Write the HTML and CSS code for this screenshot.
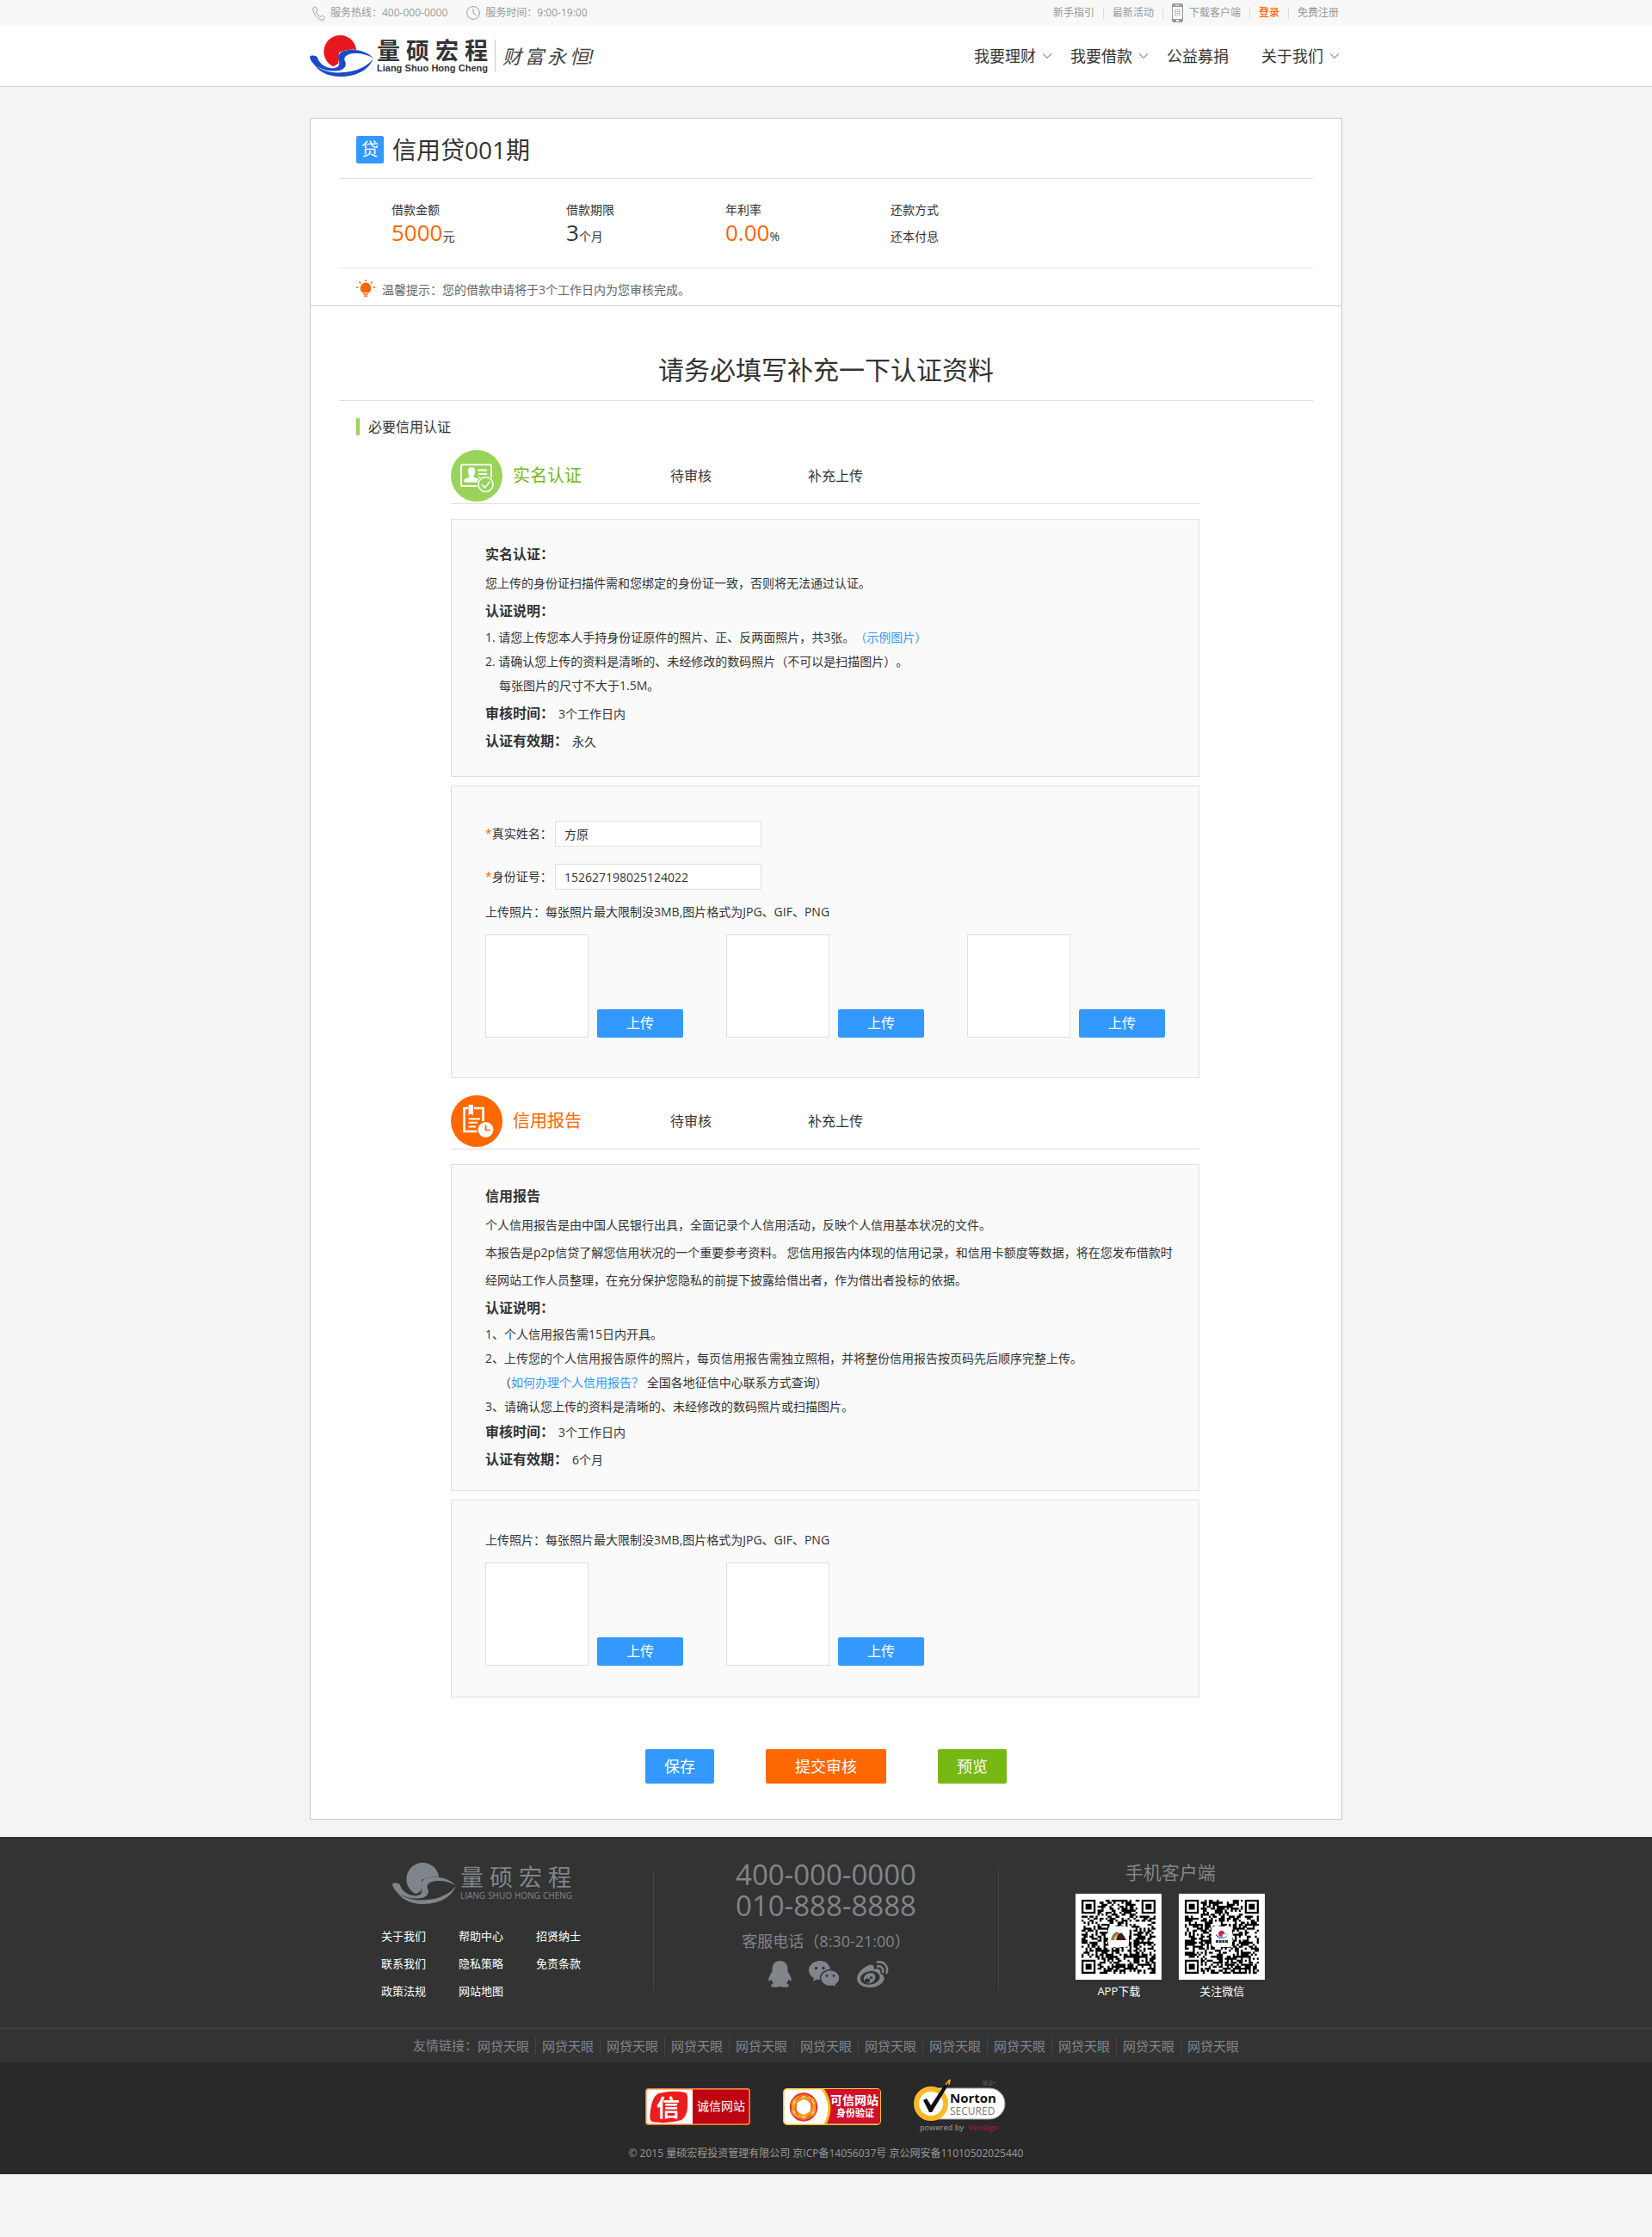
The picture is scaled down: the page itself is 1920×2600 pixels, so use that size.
FILE: index.html
```html
<!DOCTYPE html>
<html lang="zh-CN">
<head>
<meta charset="utf-8">
<meta name="viewport" content="width=device-width, initial-scale=1">
<title>信用贷001期 - 量硕宏程</title>
<link rel="stylesheet" href="styles.css">
</head>
<body>
<svg class="defs" aria-hidden="true">
  <symbol id="emblem" viewBox="0 0 222 144">
    <circle class="em-sun" cx="106" cy="57" r="57"/>
    <path class="em-back" d="M102 60C150 38 202 52 222 82C204 118 150 138 96 138L20 110L0 84L26 76C34 98 60 110 84 108L100 98Z"/>
    <path class="em-wave" d="M0 74C4 68 22 70 26 76C34 104 62 117 84 115C102 112 106 102 101 88C96 70 104 58 122 53C160 44 200 56 222 80C200 66 170 60 148 64C124 68 116 80 124 93C130 108 118 122 96 124C56 128 4 108 0 74Z"/>
    <path class="em-wave" d="M10 94C30 122 70 132 110 130C160 128 200 110 222 81C204 124 160 144 106 144C60 144 28 126 10 94Z"/>
  </symbol>
  <symbol id="chevron" viewBox="0 0 10 6"><path d="M0 0.500L5 5.300L10 0.500" fill="none" stroke="#999" stroke-width="1.200"/></symbol>
</svg>

<div class="topbar">
  <div class="wrap topbar-row">
    <div class="service">
      <span class="service-item">
        <svg width="15" height="17" viewBox="0 0 15 17" fill="none" stroke="#999"><path d="M3.500 0.700L1.200 2C0 5 2 9.500 5 12.500C8 15.800 11 16.800 13 16L14.500 13.800C14.600 13 12 11 11 11.200L9.500 12.700C8 12.300 5 9 4.300 7L5.400 5.200C5.600 4 4.500 1 3.500 0.700Z"/></svg>
        服务热线：400-000-0000
      </span>
      <span class="service-item">
        <svg width="16" height="16" viewBox="0 0 16 16" fill="none" stroke="#999"><circle cx="8" cy="8" r="7.400"/><path d="M8 3V8.500L11.500 10.500"/></svg>
        服务时间：9:00-19:00
      </span>
    </div>
    <nav class="quick">
      <a href="#">新手指引</a>
      <a href="#">最新活动</a>
      <a href="#" class="quick-app">
        <svg width="13" height="22" viewBox="0 0 13 22"><path fill="#999" fill-rule="evenodd" d="M2 0H11Q13 0 13 2V20Q13 22 11 22H2Q0 22 0 20V2Q0 0 2 0ZM1 4V18H12V4ZM4 1.500V2.500H9V1.500ZM5 19V21H8V19Z"/><path stroke="#999" stroke-width="1.200" stroke-dasharray="1.500 1" d="M3 7.500H10M3.500 9.500H10M3 11.500H10M3.500 13.500H10"/></svg>
        下载客户端
      </a>
      <a href="#" class="login">登录</a>
      <a href="#">免费注册</a>
    </nav>
  </div>
</div>

<header class="header">
  <div class="wrap header-row">
    <a class="brand" href="#">
      <svg class="emblem emblem-color" width="74" height="48"><use href="#emblem"/></svg>
      <span class="brand-text">
        <span class="brand-name"><i>量</i><i>硕</i><i>宏</i><i>程</i></span>
        <span class="brand-latin"><i>Liang</i><i>Shuo</i><i>Hong</i><i>Cheng</i></span>
      </span>
      <span class="slogan"><span>财</span><span>富</span><span>永</span><span>恒!</span></span>
    </a>
    <nav class="nav">
      <a href="#">我要理财<svg width="10" height="6"><use href="#chevron"/></svg></a>
      <a href="#">我要借款<svg width="10" height="6"><use href="#chevron"/></svg></a>
      <a href="#" class="nav-plain">公益募捐</a>
      <a href="#">关于我们<svg width="10" height="6"><use href="#chevron"/></svg></a>
    </nav>
  </div>
</header>

<main class="wrap card">
  <section class="loan">
    <div class="loan-head"><span class="tag">贷</span><h1>信用贷001期</h1></div>
    <dl class="stats">
      <div><dt>借款金额</dt><dd><b class="hot">5000</b><small>元</small></dd></div>
      <div><dt>借款期限</dt><dd><b>3</b><small>个月</small></dd></div>
      <div><dt>年利率</dt><dd><b class="hot">0.00</b><small>%</small></dd></div>
      <div><dt>还款方式</dt><dd><small>还本付息</small></dd></div>
    </dl>
    <p class="tip">
      <svg width="22" height="20" viewBox="0 0 22 20"><g fill="#ff6700"><path d="M11 3.500A6.500 6.500 0 0 1 14.500 15.300H7.500A6.500 6.500 0 0 1 11 3.500Z"/><rect x="8" y="16.200" width="6" height="1.400"/><rect x="9" y="18.400" width="4" height="1.400"/></g><path d="M11 0V2M3.500 2.500L5 4.500M18.500 2.500L17 4.500M0 9H2.500M19.500 9H22" stroke="#ff6700" stroke-width="1.500"/></svg>
      温馨提示：您的借款申请将于3个工作日内为您审核完成。
    </p>
  </section>

  <form class="apply">
    <h2 class="apply-title">请务必填写补充一下认证资料</h2>
    <h3 class="group-title">必要信用认证</h3>

    <div class="column">
      <section class="cert cert-id">
        <header class="cert-head">
          <svg width="60" height="60" viewBox="0 0 60 60"><circle cx="30" cy="30" r="30" fill="#98d45a"/><rect x="12" y="17" width="35" height="25" rx="1.500" fill="none" stroke="#fff" stroke-width="2"/><path fill="#fff" d="M24 20C27.500 20 28.500 22.500 28 26C27.500 29 26.500 29.500 26.500 31.500L33 34V37.500H15.500V34L21.500 31.500C21.500 29.500 20.500 29 20 26C19.500 22.500 20.500 20 24 20Z"/><path d="M31 23.500H42M32 28H42M32 32H36" stroke="#fff" stroke-width="2"/><circle cx="40.500" cy="40" r="10.500" fill="#98d45a"/><circle cx="40.500" cy="40" r="8.500" fill="none" stroke="#fff" stroke-width="1.700"/><path d="M36 40L39.500 44L45.500 36.500" fill="none" stroke="#fff" stroke-width="1.700"/></svg>
          <h3>实名认证</h3><span>待审核</span><a href="#">补充上传</a>
        </header>
        <div class="panel notes notes-id">
          <h4>实名认证：</h4>
          <p>您上传的身份证扫描件需和您绑定的身份证一致，否则将无法通过认证。</p>
          <h4>认证说明：</h4>
          <ul>
            <li>1. 请您上传您本人手持身份证原件的照片、正、反两面照片，共3张。<a href="#">（示例图片）</a></li>
            <li>2. 请确认您上传的资料是清晰的、未经修改的数码照片（不可以是扫描图片）。</li>
            <li class="sub">每张图片的尺寸不大于1.5M。</li>
          </ul>
          <p class="fact"><strong>审核时间：</strong>3个工作日内</p>
          <p class="fact"><strong>认证有效期：</strong>永久</p>
        </div>
        <div class="panel fields">
          <div class="field"><label for="name"><em>*</em>真实姓名：</label><input id="name" type="text" value="方原"></div>
          <div class="field"><label for="idno"><em>*</em>身份证号：</label><input id="idno" type="text" value="152627198025124022"></div>
          <p class="hint">上传照片：每张照片最大限制没3MB,图片格式为JPG、GIF、PNG</p>
          <div class="uploads">
            <div class="upload"><span class="preview"></span><button type="button">上传</button></div>
            <div class="upload"><span class="preview"></span><button type="button">上传</button></div>
            <div class="upload"><span class="preview"></span><button type="button">上传</button></div>
          </div>
        </div>
      </section>

      <section class="cert cert-report">
        <header class="cert-head">
          <svg width="60" height="60" viewBox="0 0 60 60"><circle cx="30" cy="30" r="30" fill="#ff6700"/><path d="M20 15H15.500V42H31M27 15H37.500V31" fill="none" stroke="#fff" stroke-width="2.600"/><path fill="#fff" d="M20.500 11H26V23.500L23.200 21.500L20.500 23.500Z"/><path d="M20.500 27.500H34M20.500 31.800H31M20.500 36.500H29" stroke="#fff" stroke-width="2"/><circle cx="40.500" cy="40" r="10.500" fill="#ff6700"/><circle cx="40.500" cy="40" r="9" fill="#fff"/><path d="M40.500 34.500V40.500H45.500" fill="none" stroke="#ff6700" stroke-width="1.700"/></svg>
          <h3>信用报告</h3><span>待审核</span><a href="#">补充上传</a>
        </header>
        <div class="panel notes notes-report">
          <h4>信用报告</h4>
          <p>个人信用报告是由中国人民银行出具，全面记录个人信用活动，反映个人信用基本状况的文件。</p>
          <p class="long">本报告是p2p信贷了解您信用状况的一个重要参考资料。 您信用报告内体现的信用记录，和信用卡额度等数据，将在您发布借款时经网站工作人员整理，在充分保护您隐私的前提下披露给借出者，作为借出者投标的依据。</p>
          <h4>认证说明：</h4>
          <ul>
            <li>1、个人信用报告需15日内开具。</li>
            <li>2、上传您的个人信用报告原件的照片，每页信用报告需独立照相，并将整份信用报告按页码先后顺序完整上传。</li>
            <li class="sub">（<a href="#">如何办理个人信用报告？</a> 全国各地征信中心联系方式查询）</li>
            <li>3、请确认您上传的资料是清晰的、未经修改的数码照片或扫描图片。</li>
          </ul>
          <p class="fact"><strong>审核时间：</strong>3个工作日内</p>
          <p class="fact"><strong>认证有效期：</strong>6个月</p>
        </div>
        <div class="panel fields fields-short">
          <p class="hint">上传照片：每张照片最大限制没3MB,图片格式为JPG、GIF、PNG</p>
          <div class="uploads">
            <div class="upload"><span class="preview"></span><button type="button">上传</button></div>
            <div class="upload"><span class="preview"></span><button type="button">上传</button></div>
          </div>
        </div>
      </section>
    </div>

    <div class="actions">
      <button type="button" class="save">保存</button>
      <button type="submit" class="submit">提交审核</button>
      <button type="button" class="view">预览</button>
    </div>
  </form>
</main>

<footer class="footer">
  <div class="wrap footer-main">
    <div class="about">
      <div class="brand footer-brand">
        <svg class="emblem emblem-gray" width="74" height="48"><use href="#emblem"/></svg>
        <span class="brand-text">
          <span class="brand-name"><i>量</i><i>硕</i><i>宏</i><i>程</i></span>
          <span class="brand-latin"><i>LIANG</i><i>SHUO</i><i>HONG</i><i>CHENG</i></span>
        </span>
      </div>
      <nav class="sitemap">
        <a href="#">关于我们</a><a href="#">帮助中心</a><a href="#">招贤纳士</a>
        <a href="#">联系我们</a><a href="#">隐私策略</a><a href="#">免责条款</a>
        <a href="#">政策法规</a><a href="#">网站地图</a>
      </nav>
    </div>
    <span class="rule"></span>
    <div class="contact">
      <p class="tel">400-000-0000</p>
      <p class="tel">010-888-8888</p>
      <p class="hours">客服电话（8:30-21:00）</p>
      <div class="social">
        <a href="#" aria-label="QQ"><svg width="27" height="31" viewBox="0 0 27 31"><path fill="#80858c" d="M13.500 0C19 0 22.500 4 22.500 9.500V12.500C24.500 15.500 27 19.500 26.800 22.500C26.500 24.500 25 23.500 23.500 21.500C23 23.500 22 25 21 26C23 27 24.500 28.500 23.500 30C21 31.300 16 31 13.500 29.500C11 31 6 31.300 3.500 30C2.500 28.500 4 27 6 26C5 25 4 23.500 3.500 21.500C2 23.500 0.500 24.500 0.200 22.500C0 19.500 2.500 15.500 4.500 12.500V9.500C4.500 4 8 0 13.500 0Z"/></svg></a>
        <a href="#" aria-label="微信"><svg width="36" height="31" viewBox="0 0 36 31"><path fill="#80858c" d="M13 0C20 0 25 5 25 11C25 18 20 22 13 22C11.500 22 10 21.800 9 21.400L5 24L6 20C2.500 18 0 15 0 11C0 5 6 0 13 0Z"/><path fill="#80858c" stroke="#333" stroke-width="1.500" d="M25 10.500C31 10.500 36 15 36 20C36 23.500 34 26 31.500 27.500L32 31L28 29.200C20 31 13.500 26 13.500 20C13.500 15 19 10.500 25 10.500Z"/><g fill="#333"><circle cx="8.500" cy="8.500" r="1.700"/><circle cx="17" cy="8.500" r="1.700"/><circle cx="21" cy="17.500" r="1.400"/><circle cx="29" cy="17.500" r="1.400"/></g></svg></a>
        <a href="#" aria-label="微博"><svg width="37" height="31" viewBox="0 0 37 31"><path fill="#80858c" fill-rule="evenodd" d="M14 5C18 3.500 20.500 5.500 19.500 10C24 8.500 28 9.500 27 14.500C31 16 32 19 31.500 21.500C30 27.500 22 31 15 31C7 31 0 27 0 21C0 14 8 7 14 5ZM15 12C8.500 13 3.500 17 4 21.500C4.500 26 10 28.500 16 27.500C22.500 26.500 27 22.500 26.500 18.500C26 14 21 11.200 15 12Z"/><path fill="#80858c" fill-rule="evenodd" d="M14 14.500C19.500 13.500 22.500 17 21 21C19.500 25 15 27 11.500 26C8 25 7 21.500 8.500 18.500C9.500 16.200 11.500 15 14 14.500ZM12 20.500A2.600 2.600 0 1 0 12.100 25.500A2.600 2.600 0 1 0 12 20.500ZM16.500 18.300A1.300 1.300 0 1 0 16.600 20.800A1.300 1.300 0 1 0 16.500 18.300Z"/><path d="M24 6.500C28 5.500 31 9 30 13M24 1.500C31 0 37 6 34.500 14" fill="none" stroke="#80858c" stroke-width="2.400" stroke-linecap="round"/></svg></a>
      </div>
    </div>
    <span class="rule"></span>
    <div class="mobile">
      <h3>手机客户端</h3>
      <div class="codes">
        <figure>
          <svg class="qr" data-seed="7" width="100" height="100" viewBox="0 0 100 100"><rect width="100" height="100" fill="#fff"/><path class="qr-modules"/><rect x="38" y="38" width="24" height="24" rx="4" fill="#fff"/><path d="M42 54Q43 46 49 45" fill="none" stroke="#1c9a4b" stroke-width="1.500"/><path d="M43.500 54Q45 47 50 46" fill="none" stroke="#e3232c" stroke-width="1.500"/><path d="M45 54Q47 47 52 47" fill="none" stroke="#f6b21b" stroke-width="1.500"/><path d="M47 54Q49 44 54 46L57 50L59 54Z" fill="#3a2010"/></svg>
          <figcaption>APP下载</figcaption>
        </figure>
        <figure>
          <svg class="qr" data-seed="23" width="100" height="100" viewBox="0 0 100 100"><rect width="100" height="100" fill="#fff"/><path class="qr-modules"/><rect x="38" y="38" width="24" height="24" rx="4" fill="#fff"/><svg class="emblem emblem-color" x="43" y="43" width="14" height="9"><use href="#emblem"/></svg><path d="M43 55.500H57" stroke="#333" stroke-width="3" stroke-dasharray="3 0.700"/></svg>
          <figcaption>关注微信</figcaption>
        </figure>
      </div>
    </div>
  </div>

  <div class="friends">
    <span>友情链接：</span>
    <ul>
      <li><a href="#">网贷天眼</a></li><li><a href="#">网贷天眼</a></li><li><a href="#">网贷天眼</a></li><li><a href="#">网贷天眼</a></li><li><a href="#">网贷天眼</a></li><li><a href="#">网贷天眼</a></li><li><a href="#">网贷天眼</a></li><li><a href="#">网贷天眼</a></li><li><a href="#">网贷天眼</a></li><li><a href="#">网贷天眼</a></li><li><a href="#">网贷天眼</a></li><li><a href="#">网贷天眼</a></li>
    </ul>
  </div>

  <div class="legal">
    <div class="badges">
      <svg class="badge" width="122" height="43" viewBox="0 0 122 43"><rect x="0.750" y="0.750" width="120.500" height="41.500" rx="3" fill="#fff" stroke="#f47b20" stroke-width="1.500"/><path d="M55 1.500H118Q120.500 1.500 120.500 4V39Q120.500 41.500 118 41.500H55Z" fill="#bd0410"/><path d="M16 6Q32 2 46 5Q50 6 49 16Q50 32 42 37Q26 42 8 39Q4 38 6 26Q8 9 16 6Z" fill="#ee1c1c"/><text x="13" y="33" font-size="27" font-weight="700" fill="#fff">信</text><text x="60" y="26" font-size="14" fill="#fff">诚信网站</text></svg>
      <svg class="badge" width="114" height="43" viewBox="0 0 114 43"><rect x="0.750" y="0.750" width="112.500" height="41.500" rx="4" fill="#fff" stroke="#f5c22b" stroke-width="1.500"/><path d="M47 1H110Q113 1 113 4V38Q113 41.500 110 41.500H50Q60 20 47 1Z" fill="#d0112b"/><path d="M46 1Q60 20 49 42" fill="none" stroke="#f9c016" stroke-width="3"/><g fill="none" stroke-width="2.500"><ellipse cx="24" cy="22" rx="15" ry="15.500" stroke="#e3352a"/><ellipse cx="24" cy="22" rx="14" ry="9.500" stroke="#f39a1d" transform="rotate(30 24 22)"/><ellipse cx="24" cy="22" rx="14" ry="9.500" stroke="#ee6a22" transform="rotate(90 24 22)"/><ellipse cx="24" cy="22" rx="14" ry="9.500" stroke="#f39a1d" transform="rotate(150 24 22)"/></g><text x="55" y="19" font-size="14" font-weight="700" fill="#fff">可信网站</text><text x="62" y="33" font-size="11" font-weight="700" fill="#fff">身份验证</text></svg>
      <svg class="badge" width="108" height="62" viewBox="0 0 108 62"><rect x="4" y="10" width="102" height="36" rx="18" fill="#fff" stroke="#999"/><circle cx="20" cy="28" r="17" fill="#fff" stroke="#fdb924" stroke-width="6"/><path d="M11 24L15 22L20 30L35 7L40 2L38 10L21 38H18Z" fill="#111"/><path d="M37 6L42 0L41 6" fill="none" stroke="#fdb924" stroke-width="1.500"/><text x="42" y="27" font-size="15" font-weight="700" fill="#111">Norton</text><text x="42" y="41" font-size="12" fill="#777">SECURED</text><text x="80" y="6" font-size="6" fill="#666">验证+</text><text x="7" y="59" font-size="9" font-weight="600" fill="#888">powered by</text><text x="63" y="59" font-size="9" font-weight="600" fill="#8c1f4d">VeriSign</text></svg>
    </div>
    <p class="copyright">© 2015 量硕宏程投资管理有限公司 京ICP备14056037号 京公网安备11010502025440</p>
  </div>
</footer>
<script src="script.js"></script>
</body>
</html>
```
FILE: styles.css
```css
* { box-sizing: border-box; }

body {
  margin: 0;
  background: #f4f4f4;
  color: #333;
  font-family: "Open Sans", "Noto Sans CJK SC", sans-serif;
  font-size: 14px;
  line-height: 20px;
  text-spacing-trim: space-all;
}

h1, h2, h3, h4, p, dl, dd, ul, figure { margin: 0; padding: 0; }
ul { list-style: none; }
h1, h2, h3 { font-weight: 400; }
i, em { font-style: normal; }
a { color: inherit; text-decoration: none; }
svg { flex: none; }
button, input { font: inherit; color: inherit; }
.defs { position: absolute; width: 0; height: 0; }
.wrap { max-width: 1200px; margin: 0 auto; }

.emblem-color { --sun: #e8171f; --wave: #1a4bc4; --back: #fff; }
.emblem-gray { --sun: #80858c; --wave: #80858c; --back: #333; }
.em-sun { fill: var(--sun); }
.em-wave { fill: var(--wave); }
.em-back { fill: var(--back); }

/* top bar */
.topbar { background: #f8f8f8; color: #999; font-size: 12px; }
.topbar-row { display: flex; justify-content: space-between; min-height: 30px; align-items: center; padding: 0 4px 0 3px; }
.service { display: flex; gap: 22px; }
.service-item { display: flex; align-items: center; gap: 6px; }
.quick { display: flex; align-items: center; }
.quick a { display: flex; align-items: center; gap: 7px; padding: 0 10px; line-height: 14px; }
.quick a + a { border-left: 1px solid #ddd; }
.quick a:last-child { padding-right: 0; }
.quick .quick-app { height: 14px; }
.quick .login { color: #ff6700; font-weight: 500; }

/* header */
.header { background: #fff; border-bottom: 1px solid #ccc; }
.header-row { display: flex; justify-content: space-between; align-items: center; min-height: 70px; padding-right: 4px; }
.brand { display: flex; align-items: center; gap: 4px; }
.brand-text { display: flex; flex-direction: column; }
.brand-name { display: flex; gap: 7px; font-size: 27px; font-weight: 700; line-height: 28px; }
.brand-latin { display: flex; justify-content: space-between; gap: 3px; font: 700 11px/12px "Liberation Sans", sans-serif; }
.slogan { display: flex; gap: 4px; margin-left: 4px; padding-left: 8px; border-left: 1px solid #ccc; font-size: 22px; font-style: italic; line-height: 38px; color: #444; }
.nav { display: flex; gap: 22px; font-size: 18px; line-height: 24px; }
.nav a { display: flex; align-items: center; gap: 8px; }
.nav .nav-plain { padding-right: 16px; }

/* card */
.card { margin-top: 36px; background: #fff; border: 1px solid #ccc; }
.loan { padding: 20px 33px 0; border-bottom: 1px solid #ccc; }
.loan-head { display: flex; align-items: center; gap: 10px; padding: 0 20px 17px; border-bottom: 1px solid #ddd; }
.loan-head h1 { font-size: 28px; line-height: 32px; }
.tag { width: 32px; border-radius: 2px; background: #39f; color: #fff; font-size: 20px; line-height: 32px; text-align: center; }
.stats { display: grid; grid-template-columns: 203px 185px 192px 1fr; padding: 26px 0 25px 61px; border-bottom: 1px solid #e8e8e8; }
.stats dd { font-size: 26px; line-height: 32px; }
.stats b { font-weight: 400; }
.stats small { font-size: 14px; line-height: 14px; }
.hot { color: #ff6700; }
.tip { display: flex; gap: 8px; padding: 13px 20px 6px; color: #666; line-height: 24px; }
.tip svg { display: block; }

/* application form */
.apply-title { margin: 0 33px; padding: 54px 0 15px; border-bottom: 1px solid #ddd; font-size: 30px; line-height: 40px; text-align: center; }
.group-title { margin: 20px 53px 17px; padding-left: 10px; border-left: 4px solid #98d45a; font-size: 16px; line-height: 20px; }
.column { display: flex; flex-direction: column; gap: 20px; margin: 0 165px 0 163px; }
.cert { display: flex; flex-direction: column; gap: 10px; }
.cert-head { display: grid; grid-template-columns: 72px 183px 160px 1fr; align-items: center; margin-bottom: 7px; padding-bottom: 2px; border-bottom: 1px solid #ddd; font-size: 16px; }
.cert-head h3 { font-size: 20px; }
.cert-id h3 { color: #76b814; }
.cert-report h3 { color: #ff6700; }

.panel { border: 1px solid #e0e0e0; background: #fafafa; }
.notes { line-height: 33px; }
.notes-id { padding: 24px 22px 24px 39px; }
.notes-report { padding: 20px 22px 19px 39px; }
.notes h4, .notes strong { font-size: 16px; font-weight: 700; }
.notes a { color: #39f; }
.notes li { line-height: 28px; }
.notes .long { line-height: 32px; }
.notes .sub { padding-left: 16px; }
.notes .fact { line-height: 32px; }
.notes strong { margin-right: 5px; line-height: 16px; }
.notes-id ul { margin-bottom: 3px; }

.fields { padding: 40px 39px 46px; }
.fields-short { padding: 36px 39px; }
.field { display: flex; align-items: center; margin-bottom: 20px; }
.field label { width: 81px; white-space: nowrap; }
.field em { color: #ff6700; }
.field input { width: 240px; height: 30px; padding: 0 10px; border: 1px solid #e0e0e0; background: #fff; outline: 0; }
.hint { margin-bottom: 16px; }
.field + .hint { margin-top: -4px; }
.uploads { display: flex; gap: 50px; }
.upload { display: flex; align-items: flex-end; gap: 10px; }
.preview { width: 120px; height: 120px; border: 1px solid #e0e0e0; background: #fff; }

button { padding: 0; border: 0; border-radius: 2px; background: #39f; color: #fff; cursor: pointer; }
.upload button { width: 100px; font-size: 16px; line-height: 33px; }
.actions { display: flex; justify-content: center; gap: 60px; padding: 60px 0 41px; }
.actions button { width: 80px; font-size: 18px; line-height: 40px; }
.actions .submit { width: 140px; background: #ff6700; }
.actions .view { background: #76b814; }

/* footer */
.footer { margin-top: 20px; background: #333; color: #80858c; }
.footer-main { display: grid; grid-template-columns: 1fr 1px 1fr 1px 1fr; padding: 26px 0 27px; }
.rule { height: 140px; margin-top: 13px; background: #444; }
.about { padding: 4px 0 0 83px; }
.footer-brand { margin: 0 0 21px 13px; gap: 5px; }
.footer-brand .brand-name { font-weight: 400; }
.footer-brand .brand-latin { font: 400 10px/14px "Open Sans", sans-serif; }
.sitemap { display: grid; grid-template-columns: repeat(3, 90px); color: #fff; font-size: 13px; line-height: 32px; }
.contact, .mobile { text-align: center; }
.tel { font-size: 33px; line-height: 36px; }
.hours { margin-top: 11px; font-size: 18px; line-height: 24px; }
.social { display: flex; justify-content: center; gap: 20px; margin: 11px 0 0 6px; }
.social svg { display: block; }
.mobile h3 { margin-bottom: 10px; font-size: 21px; line-height: 30px; }
.codes { display: flex; justify-content: center; gap: 20px; }
.qr { display: block; }
.codes figcaption { margin-top: 3px; color: #fff; font-size: 13px; }

.friends { display: flex; justify-content: center; border-top: 1px solid #444; font-size: 15px; line-height: 39px; }
.friends ul { display: flex; align-items: center; }
.friends li { padding: 0 7px; line-height: 20px; }
.friends li:first-child { padding-left: 0; }
.friends li + li { border-left: 1px solid #444; }
.friends li:last-child { padding-right: 0; }

.legal { padding: 20px 0 14px; background: #292929; text-align: center; }
.badges { display: flex; justify-content: center; align-items: center; gap: 38px; }
.copyright { margin-top: 14px; color: #999; font-size: 12px; }
```
FILE: script.js
```javascript
// Draws the modules of each code: 37 x 37 cells inside a 7px quiet zone.
(function () {
  var SIZE = 37;
  var MARGIN = 7;
  var CELL = 86 / SIZE;

  function ring(x, y, cx, cy, outer) {
    var d = Math.max(Math.abs(x - cx), Math.abs(y - cy));
    if (d > outer) return null;
    return outer === 4 ? d === 3 || d < 2 : d !== 1;
  }

  document.querySelectorAll('.qr').forEach(function (svg) {
    var state = Number(svg.dataset.seed) * 7919;
    var d = '';
    for (var y = 0; y < SIZE; y++) {
      for (var x = 0; x < SIZE; x++) {
        state = (state * 1103515245 + 12345) % 2147483648;
        var dark = state / 2147483648 > 0.48;
        [[3, 3, 4], [SIZE - 4, 3, 4], [3, SIZE - 4, 4], [30, 30, 2]].forEach(function (f) {
          var r = ring(x, y, f[0], f[1], f[2]);
          if (r !== null) dark = r;
        });
        if (dark) {
          d += 'M' + (MARGIN + x * CELL).toFixed(2) + ' ' + (MARGIN + y * CELL).toFixed(2) +
            'h' + CELL.toFixed(2) + 'v' + CELL.toFixed(2) + 'h-' + CELL.toFixed(2) + 'z';
        }
      }
    }
    svg.querySelector('.qr-modules').setAttribute('d', d);
  });
})();
```
